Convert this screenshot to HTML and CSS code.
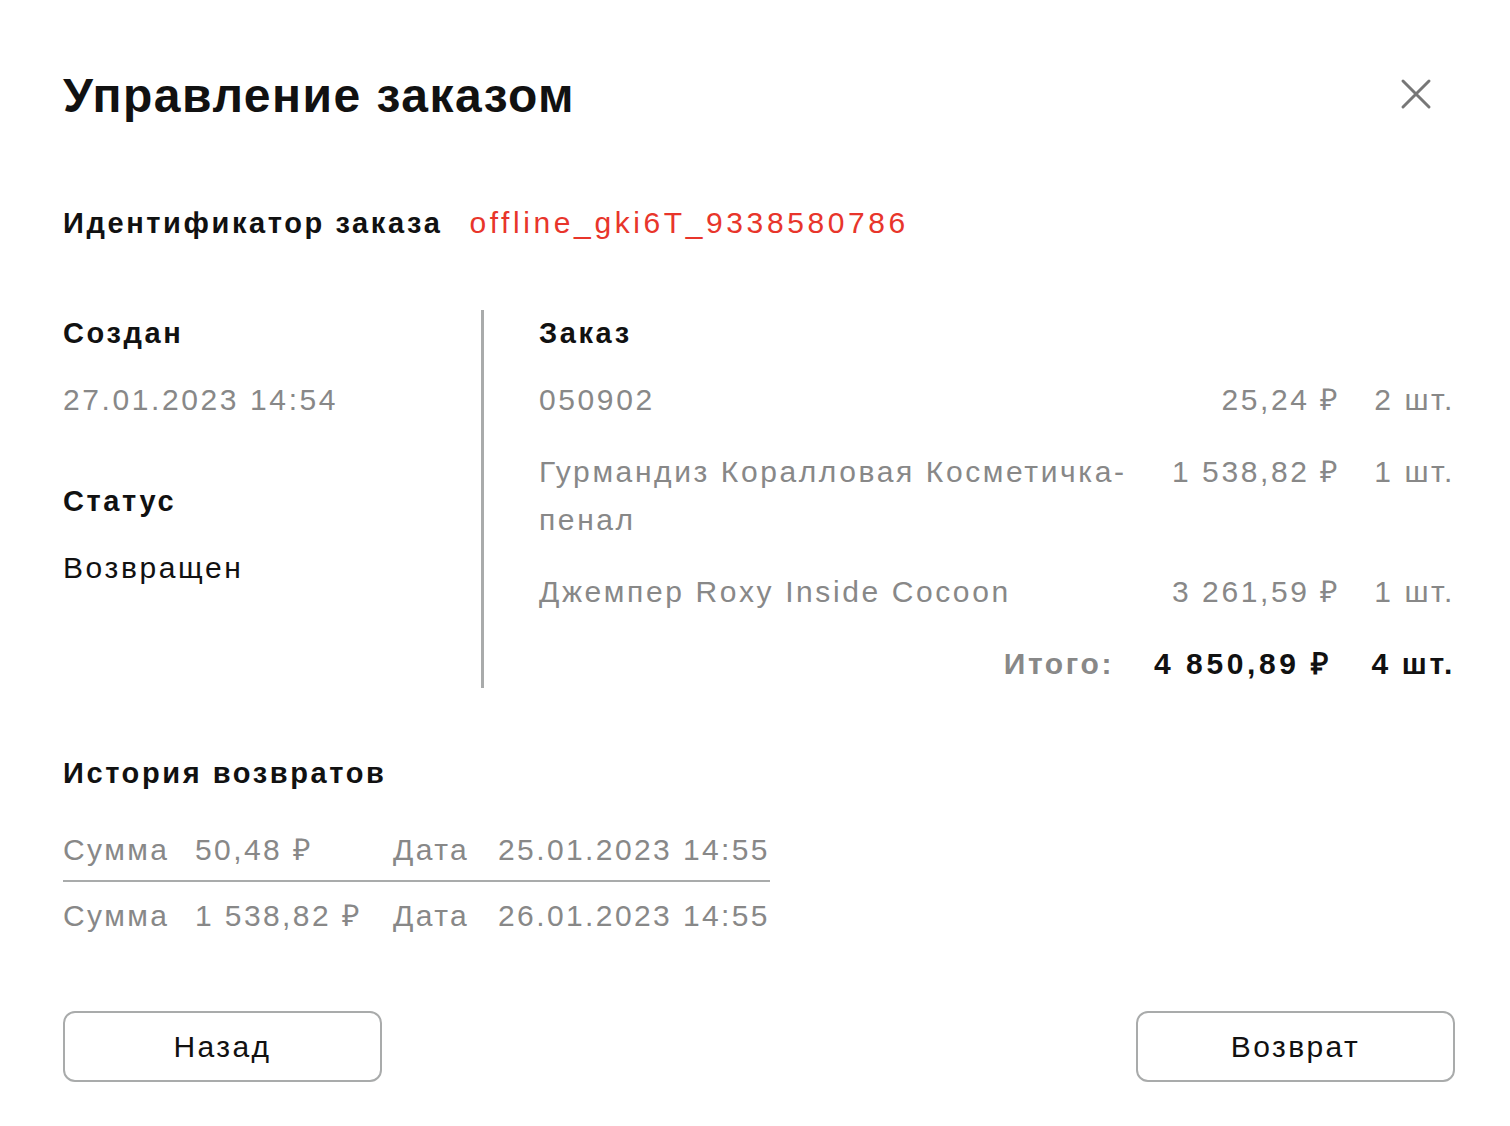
FILE: index.html
```html
<!DOCTYPE html>
<html lang="ru">
<head>
<meta charset="utf-8">
<title>Управление заказом</title>
<link rel="stylesheet" href="styles.css">
</head>
<body>
<div class="modal">
  <div class="modal-head">
    <h1 class="title">Управление заказом</h1>
    <button class="close" aria-label="Закрыть">
      <svg width="32" height="32" viewBox="0 0 32 32"><path d="M3 3 L29 29 M29 3 L3 29" stroke="#777" stroke-width="3" stroke-linecap="round" fill="none"/></svg>
    </button>
  </div>

  <div class="order-id">
    <span class="label">Идентификатор заказа</span>
    <span class="id-value">offline_gki6T_9338580786</span>
  </div>

  <div class="columns">
    <div class="col-left">
      <div class="field">
        <div class="label">Создан</div>
        <div class="value muted">27.01.2023 14:54</div>
      </div>
      <div class="field">
        <div class="label">Статус</div>
        <div class="value">Возвращен</div>
      </div>
    </div>
    <div class="col-right">
      <div class="label">Заказ</div>
      <div class="items">
        <div class="name">050902</div>
        <div class="price">25,24 ₽</div>
        <div class="qty">2 шт.</div>

        <div class="name">Гурмандиз Коралловая Косметичка-пенал</div>
        <div class="price">1&nbsp;538,82 ₽</div>
        <div class="qty">1 шт.</div>

        <div class="name">Джемпер Roxy Inside Cocoon</div>
        <div class="price">3&nbsp;261,59 ₽</div>
        <div class="qty">1 шт.</div>

        <div class="total-label">Итого:</div>
        <div class="total-price">4&nbsp;850,89 ₽</div>
        <div class="total-qty">4 шт.</div>
      </div>
    </div>
  </div>

  <div class="history">
    <div class="label">История возвратов</div>
    <div class="history-table">
      <div class="hrow">
        <span>Сумма</span><span>50,48 ₽</span><span>Дата</span><span>25.01.2023 14:55</span>
      </div>
      <div class="hrow">
        <span>Сумма</span><span>1&nbsp;538,82 ₽</span><span>Дата</span><span>26.01.2023 14:55</span>
      </div>
    </div>
  </div>

  <div class="actions">
    <button class="btn">Назад</button>
    <button class="btn">Возврат</button>
  </div>
</div>
</body>
</html>
```

FILE: styles.css
```css
html, body {
  margin: 0;
  padding: 0;
  background: #fff;
}

body {
  font-family: "Liberation Sans", Arial, sans-serif;
  color: #111;
}

.modal {
  width: 1510px;
  box-sizing: border-box;
  padding: 68px 55px 0 63px;
}

.modal-head {
  display: flex;
  justify-content: space-between;
  align-items: center;
}

.title {
  margin: 0;
  font-size: 48px;
  line-height: 56px;
  font-weight: 700;
  letter-spacing: 1.5px;
}

.close {
  border: 0;
  background: none;
  padding: 0;
  margin: 0 23px 4px 0;
  width: 32px;
  height: 32px;
  display: flex;
}

.label {
  font-size: 29px;
  line-height: 46px;
  font-weight: 700;
  letter-spacing: 2.6px;
  color: #111;
}

.order-id {
  display: flex;
  align-items: baseline;
  gap: 27px;
  margin-top: 76px;
}

.id-value {
  font-size: 30px;
  line-height: 46px;
  color: #e8352b;
  letter-spacing: 3.6px;
}

.columns {
  display: flex;
  margin-top: 64px;
}

.col-left {
  width: 418px;
  border-right: 3px solid #a9abab;
  display: flex;
  flex-direction: column;
  gap: 54px;
}

.value {
  margin-top: 20px;
  font-size: 30px;
  line-height: 48px;
  letter-spacing: 2.6px;
  color: #111;
}

.muted {
  color: #888;
}

.col-right {
  flex: 1;
  padding-left: 55px;
}

.items {
  margin-top: 20px;
  display: grid;
  grid-template-columns: minmax(0, 1fr) 200px 115px;
  row-gap: 24px;
  font-size: 30px;
  line-height: 48px;
  letter-spacing: 2.6px;
  color: #888;
}

.name {
  padding-right: 10px;
}

.price,
.qty,
.total-label,
.total-price,
.total-qty {
  text-align: right;
  white-space: nowrap;
}

.total-label,
.total-price,
.total-qty {
  font-weight: 700;
}

.total-label {
  padding-right: 26px;
  color: #888;
}

.total-price {
  padding-right: 8px;
  letter-spacing: 3.6px;
  color: #111;
}

.total-qty {
  color: #111;
}

.history {
  margin-top: 62px;
}

.history-table {
  display: inline-grid;
  margin-top: 30px;
}

.hrow {
  display: grid;
  grid-template-columns: 132px 198px 105px auto;
  font-size: 30px;
  line-height: 48px;
  letter-spacing: 2.4px;
  color: #888;
}

.hrow:first-child {
  padding-bottom: 6px;
  border-bottom: 2px solid #a9abab;
}

.hrow + .hrow {
  padding-top: 10px;
}

.actions {
  display: flex;
  justify-content: space-between;
  margin-top: 71px;
}

.btn {
  width: 319px;
  height: 71px;
  box-sizing: border-box;
  border: 2px solid #a9abab;
  border-radius: 12px;
  background: #fff;
  font-family: "Liberation Sans", Arial, sans-serif;
  font-size: 30px;
  letter-spacing: 2.4px;
  color: #111;
  padding: 0;
}
```
